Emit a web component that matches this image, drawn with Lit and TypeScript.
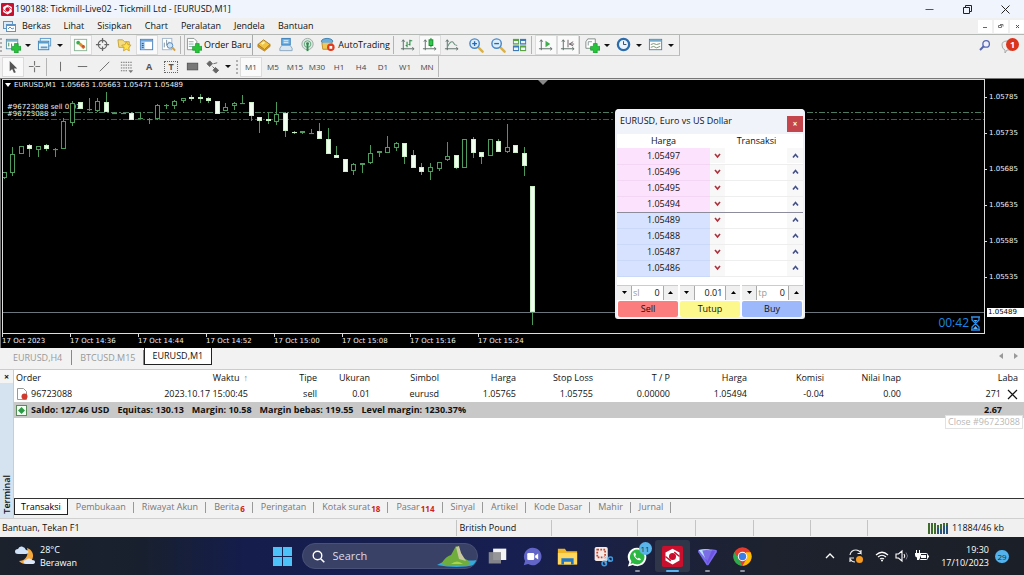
import { LitElement, html, svg, css, nothing } from 'lit';
import { customElement } from 'lit/decorators.js';
import { classMap } from 'lit/directives/class-map.js';

const plus = svg`<path d="M10 7h4v3h3v4h-3v3h-4v-3H7v-4h3z" fill="#27c43a" stroke="#14902a" stroke-width=".7"/>`;
const axes = svg`<path d="M3.500 3v11M1 12.500h13.500M2 5l1.500-2L5 5M13 11l2 1.500-2 1.500" fill="none" stroke="#5c6b66"/>`;
const lens = svg`<path d="M10.500 10.500l5 5" stroke="#d9b04a" stroke-width="2.600" stroke-linecap="round"/><circle cx="7" cy="7" r="5" fill="#d9edfb" stroke="#4b87c4" stroke-width="1.500"/>`;

const icons: Record<string, unknown> = {
  newChart: svg`<rect x="1.500" y="2.500" width="12" height="10" fill="#fff" stroke="#5a93a8"/><path d="M2 4h11" stroke="#7db4cc" stroke-width="2"/><path d="M4 10V6M7 10V7" stroke="#3a8a4a"/>${plus}`,
  profiles: svg`<rect x="3.500" y="1.500" width="11" height="8" fill="#e8f3fb" stroke="#5b9ccb"/><rect x="1.500" y="4.500" width="11" height="9" fill="#e8f3fb" stroke="#3d80b5"/><path d="M2 6h10M4 11h7" stroke="#5b9ccb" stroke-width="2"/>`,
  market: svg`<rect x="1.500" y="2.500" width="13" height="12" fill="#fbfffb" stroke="#8fb59a"/><circle cx="5.500" cy="6" r="2" fill="#2fae4a"/><path d="M7 7l5 5" stroke="#e08b2d" stroke-width="3"/><circle cx="11" cy="10" r="1.500" fill="#c8502d"/>`,
  crosshair: svg`<circle cx="8" cy="8" r="4.500" fill="none" stroke="#666" stroke-width="1.300"/><path d="M8 1v5M8 10v5M1 8h5M10 8h5" stroke="#666" stroke-width="1.300"/>`,
  star: svg`<path d="M1 3h5l2 2h5v6H2z" fill="#f3dc85" stroke="#c4a23c"/><path d="M10 5l1.600 3.200 3.400.5-2.500 2.500.6 3.500L10 13l-3.100 1.700.6-3.500L5 8.700l3.400-.5z" fill="#ffe14d" stroke="#c69a1a" stroke-width=".8"/>`,
  navigator: svg`<rect x="1.500" y="2.500" width="13" height="11" fill="#fff" stroke="#4a7fb8"/><path d="M2 4h12" stroke="#6ea4d8" stroke-width="2"/><rect x="2" y="5" width="4" height="8" fill="#9cc4ec"/><path d="M3 7h2M3 9h2M3 11h2" stroke="#356"/>`,
  tester: svg`<rect x="1.500" y="1.500" width="10" height="12" fill="#fff" stroke="#a3b8cc"/><path d="M3.500 11V6M6 9V3M8.500 11V5" stroke="#7a8d9d"/><circle cx="9.500" cy="9" r="3" fill="#cfe6f9" stroke="#5388bd"/><path d="M12 11l3 3.500" stroke="#d0a04a" stroke-width="2"/>`,
  order: svg`<path d="M1.500 1.500h7l3 3v9h-10z" fill="#fff" stroke="#8a958f"/><path d="M3 5h5M3 7.500h5M3 10h4" stroke="#8aa"/>${plus}`,
  editor: svg`<path d="M2 8l6-5 7 5-6 5.500z" fill="#f3c440" stroke="#a97a1c"/><path d="M2 8v2.500L9 15l6-5V8l-6 5.500z" fill="#d99b28" stroke="#a97a1c" stroke-width=".7"/><path d="M6 7.500l3-2" stroke="#fff3b0" stroke-width="2"/>`,
  terminal: svg`<rect x="4" y="1.500" width="9" height="7" fill="#6cb2e8" stroke="#3a7fb8"/><path d="M6 4h5M6 6h5" stroke="#e4f4ff"/><path d="M2 12l2-3h9l2 3v2.500H2z" fill="#d8e6f2" stroke="#8aa5bd"/>`,
  signal: svg`<circle cx="8" cy="7.500" r="6" fill="#dfe7e3" stroke="#9caaa4"/><circle cx="8" cy="7.500" r="3.500" fill="none" stroke="#5fa87a"/><path d="M8 7v8" stroke="#2c8c4c" stroke-width="2"/><circle cx="8" cy="7" r="1.500" fill="#2c8c4c"/>`,
  auto: svg`<ellipse cx="7.500" cy="4.500" rx="6" ry="3" fill="#6aaede" stroke="#3b7fb0"/><path d="M2 6l1 7h8l2-7" fill="#f0c657" stroke="#bd8d2a"/><circle cx="11.500" cy="11" r="4" fill="#df3b1c"/><rect x="10" y="9.500" width="3" height="3" fill="#fff"/>`,
  bars: svg`${axes}<path d="M7.500 5v6M6 9h1.500M10.500 3v6M10.500 4H13M9 8h1.500" fill="none" stroke="#2c8e46" stroke-width="1.200"/>`,
  candles: svg`${axes}<path d="M9.500 1v10" stroke="#148a2a"/><rect x="7.500" y="3" width="4" height="6" fill="#2ec84a" stroke="#148a2a"/>`,
  line: svg`${axes}<path d="M4 10c2-5 5-6 6-4s2 3 4 3" fill="none" stroke="#6e9480" stroke-width="1.200"/>`,
  zoomIn: svg`${lens}<path d="M7 4.500v5M4.500 7h5" stroke="#2767ad" stroke-width="1.400"/>`,
  zoomOut: svg`${lens}<path d="M4.500 7h5" stroke="#2767ad" stroke-width="1.400"/>`,
  tile: svg`<rect x="1" y="2" width="6.500" height="6" fill="#5aa33e"/><rect x="8.500" y="2" width="6.500" height="6" fill="#3d79b8"/><rect x="1" y="9" width="6.500" height="6" fill="#3d79b8"/><rect x="8.500" y="9" width="6.500" height="6" fill="#5aa33e"/><path d="M2 5.500h4.500M9.500 5.500H14M2 12.500h4.500M9.500 12.500H14" stroke="#eaf5ff" stroke-width="2.500"/>`,
  scroll: svg`${axes}<path d="M8 4l5 3.500L8 11z" fill="#3fae4c"/>`,
  shift: svg`${axes}<path d="M8.500 3v8M14 5l-4 2.500 4 2M10 7.500h5" stroke="#6a5f66" fill="none"/>`,
  indicators: svg`<path d="M4 2h8v10H2V5z" fill="#fff" stroke="#7e8a85"/><path d="M4.500 9V5h4" stroke="#899" fill="none"/>${plus}`,
  clock: svg`<circle cx="8" cy="8" r="6" fill="#e9f4fc" stroke="#2c6cab" stroke-width="2.400"/><path d="M8 4.500V8h3" stroke="#345" fill="none"/>`,
  template: svg`<rect x="1.500" y="2.500" width="13" height="11" fill="#fff" stroke="#4f87a5"/><path d="M2 4h12" stroke="#73aacb" stroke-width="2"/><path d="M3 8l3-1 3 1 4-1M3 11l3-1 3 1.500L13 10" fill="none" stroke="#75906c"/>`,
  cursor: svg`<path d="M5 2v11l2.600-2.500L9.500 15l2-1-2-4H13z" fill="#555"/>`,
  cross: svg`<path d="M8 2v5M8 9v5M2 8h5M9 8h5" stroke="#777" stroke-width="1.200"/>`,
  vline: svg`<path d="M8 3v10" stroke="#666"/>`,
  hline: svg`<path d="M3 8h10" stroke="#666"/>`,
  tline: svg`<path d="M3 13L13 3" stroke="#666"/>`,
  fibo: svg`<path d="M2 3.500h12M2 6.500h12M2 9.500h12M2 12.500h7" stroke="#666" stroke-dasharray="1.500 1"/><path d="M10 12h5l-2.500 3z" fill="#777"/>`,
  rect: svg`<rect x="2.500" y="4.500" width="11" height="7" fill="#777" stroke="#555"/>`,
  shapes: svg`<path d="M5 2l3 3-3 3-3-3zM8 8l3 3M11 9l3.500 3-3 3-3-3zM9 5l4-1" fill="#666" stroke="#666"/>`,
};
const icon = (n: string) => html`<svg class="ic" viewBox="0 0 17 17" aria-hidden="true">${icons[n]}</svg>`;

type Tool = { i?: string; t?: string; k?: 'dd' | 'sep' | 'grip' | 'gap'; on?: boolean; label?: string };
const mainTools: Tool[] = [
  { k: 'grip' }, { i: 'newChart', k: 'dd', label: 'Grafik baru' }, { i: 'profiles', k: 'dd', label: 'Profil' }, { k: 'gap' },
  { i: 'market', label: 'Pengamatan pasar', on: true }, { i: 'crosshair', label: 'Jendela data' }, { i: 'star', label: 'Navigator' },
  { i: 'navigator', label: 'Terminal', on: true }, { i: 'tester', label: 'Penguji' }, { k: 'sep' },
  { i: 'order', t: 'Order Baru' }, { i: 'editor', label: 'Editor' }, { i: 'terminal', label: 'VPS' }, { i: 'signal', label: 'Sinyal' },
  { i: 'auto', t: 'AutoTrading' }, { k: 'sep' },
  { i: 'bars', label: 'Bar' }, { i: 'candles', label: 'Candlestick', on: true }, { i: 'line', label: 'Garis' }, { k: 'gap' },
  { i: 'zoomIn', label: 'Perbesar' }, { i: 'zoomOut', label: 'Perkecil' }, { i: 'tile', label: 'Susun' }, { k: 'sep' },
  { i: 'scroll', label: 'Gulir otomatis', on: true }, { i: 'shift', label: 'Geser grafik', on: true }, { k: 'sep' },
  { i: 'indicators', k: 'dd', label: 'Indikator' }, { i: 'clock', k: 'dd', label: 'Periode' }, { i: 'template', k: 'dd', label: 'Template' },
];
const drawTools: Tool[] = [
  { k: 'gap' }, { i: 'cursor', label: 'Kursor', on: true }, { i: 'cross', label: 'Crosshair' }, { k: 'sep' },
  { i: 'vline', label: 'Garis vertikal' }, { i: 'hline', label: 'Garis horisontal' }, { i: 'tline', label: 'Garis tren' },
  { i: 'fibo', label: 'Fibonacci' }, { t: 'A', k: 'gap', label: 'Teks' }, { t: 'T', k: 'gap', label: 'Label teks' },
  { i: 'rect', label: 'Persegi' }, { i: 'shapes', k: 'dd', label: 'Panah' }, { k: 'grip' },
];
const frames = ['M1', 'M5', 'M15', 'M30', 'H1', 'H4', 'D1', 'W1', 'MN'];

// Each candle: filled, body top, body bottom, high, low (pixels, measured from TOP above the plot).
const candles: [number, number, number, number, number][] = [
  [0, 172, 178, 172, 179], [0, 154, 173, 147, 176], [0, 146, 154, 146, 154], [1, 145, 149, 144, 157], [0, 146, 150, 146, 157],
  [1, 145, 149, 144, 151], [0, 149, 149, 148, 157], [0, 121, 149, 118, 149], [0, 103, 123, 101, 126], [1, 102, 109, 102, 109],
  [0, 109, 109, 98, 111], [0, 101, 111, 98, 112], [1, 102, 112, 92, 112], [0, 113, 113, 112, 114], [0, 113, 113, 113, 114],
  [1, 113, 120, 112, 120], [0, 118, 118, 112, 119], [0, 119, 119, 118, 124], [0, 105, 119, 104, 120], [0, 105, 105, 104, 109],
  [0, 101, 106, 100, 109], [0, 98, 101, 98, 103], [1, 97, 99, 95, 101], [1, 97, 99, 94, 103], [1, 98, 101, 97, 103],
  [1, 101, 114, 101, 114], [0, 107, 111, 103, 111], [0, 103, 106, 102, 110], [0, 103, 103, 95, 104], [1, 102, 116, 102, 121],
  [1, 117, 121, 117, 133], [1, 119, 121, 112, 124], [0, 114, 122, 102, 125], [1, 113, 131, 112, 137], [1, 132, 133, 131, 134],
  [0, 131, 133, 131, 134], [0, 133, 133, 129, 134], [1, 131, 139, 123, 139], [1, 139, 154, 128, 154], [1, 155, 158, 146, 158],
  [1, 159, 172, 159, 172], [0, 164, 171, 163, 175], [0, 163, 165, 163, 173], [0, 153, 163, 145, 164], [0, 151, 153, 151, 157],
  [0, 147, 153, 136, 153], [0, 143, 148, 142, 151], [1, 143, 157, 143, 164], [1, 155, 168, 150, 168], [1, 167, 172, 163, 175],
  [0, 167, 172, 163, 180], [0, 162, 169, 162, 171], [0, 156, 160, 142, 161], [1, 155, 168, 155, 169], [0, 139, 168, 139, 168],
  [1, 139, 153, 137, 158], [1, 152, 157, 152, 164], [0, 139, 156, 139, 156], [1, 141, 152, 139, 152], [0, 147, 152, 124, 153],
  [1, 145, 153, 145, 153], [1, 153, 166, 147, 176], [1, 186, 312, 186, 325],
];
const TOP = 80;

const cols = [
  ['Order', '96723088'], ['Waktu', '2023.10.17 15:00:45'], ['Tipe', 'sell'], ['Ukuran', '0.01'], ['Simbol', 'eurusd'], ['Harga', '1.05765'],
  ['Stop Loss', '1.05755'], ['T / P', '0.00000'], ['Harga', '1.05494'], ['Komisi', '-0.04'], ['Nilai Inap', '0.00'],
];
const totals = ['Saldo: 127.46 USD', 'Equitas: 130.13', 'Margin: 10.58', 'Margin bebas: 119.55', 'Level margin: 1230.37%'];
const termTabs: [string, string?][] = [['Transaksi'], ['Pembukaan'], ['Riwayat Akun'], ['Berita', '6'], ['Peringatan'], ['Kotak surat', '18'],
  ['Pasar', '114'], ['Sinyal'], ['Artikel'], ['Kode Dasar'], ['Mahir'], ['Jurnal']];

const logo = svg`<rect width="24" height="24" rx="2" fill="#c8102e"/><path d="M12 3l8 4.500v9L12 21l-8-4.500v-9z" fill="#fff"/><circle cx="12" cy="12" r="4" fill="#c8102e"/><path d="M14 7l6 5M4 12l6 5" stroke="#c8102e" stroke-width="1.500"/>`;

const apps: [string, unknown, string?][] = [
  ['Tampilan tugas', svg`<rect x="7" y="3" width="15" height="13" fill="#f4f4f4"/><rect x="2" y="7" width="14" height="13" fill="#8d8d90" opacity=".92"/>`],
  ['Chat', svg`<path d="M12 2a10 10 0 1 1-5 18.500L2 22l1.500-5A10 10 0 0 1 12 2z" fill="#6264c7"/><rect x="6" y="8" width="8" height="8" rx="1.500" fill="#fff"/><path d="M15 11l3.500-2.500v7L15 13z" fill="#fff"/>`],
  ['File Explorer', svg`<path d="M1 3h8l2 3h12v15H1z" fill="#f0b429"/><path d="M1 8h22v13H1z" fill="#ffd75e"/><path d="M5 14h14v7H5z" fill="#2077c9"/><path d="M8 18h8v3H8z" fill="#ffd75e"/>`],
  ['Alat Pemotong', svg`<rect x="3" y="1" width="15" height="16" rx="2" fill="#f5e9e6"/><rect x="6" y="4" width="9" height="9" fill="none" stroke="#c8452c" stroke-width="2" stroke-dasharray="2 1.500"/><path d="M12 12l9 5M17 11l-2 9" stroke="#ccd9e8" stroke-width="1.500"/><circle cx="14" cy="20" r="2.500" fill="none" stroke="#3b9ae0" stroke-width="1.800"/><circle cx="21" cy="15" r="2.500" fill="none" stroke="#3b9ae0" stroke-width="1.800"/>`],
  ['WhatsApp', svg`<path d="M11.500 2a10.500 10.500 0 1 1-5 19.700L1 23.500l1.700-5.200A10.500 10.500 0 0 1 11.500 2z" fill="#fff"/><path d="M11.500 4a8.500 8.500 0 1 1-4.700 15.600L4 20.500l1-3A8.500 8.500 0 0 1 11.500 4z" fill="#2cb742"/><path d="M8 8c-1.500 2 1 5.500 3 7s4 2 5 0l-2.500-1.500-1.200 1c-1.500-.7-2.500-1.800-3-3l1-1.200L9.300 7.500z" fill="#fff"/>`, 'run'],
  ['Tickmill', logo, 'active'],
  ['Proton VPN', svg`<path d="M2 4.500q9-2 20 0 1.500.5.500 2.500L13.500 21q-1.500 2-3 0L1.500 7Q.5 5 2 4.500z" fill="#7a6cf0"/><path d="M2 4.500q8-2 15 .5L12 17 4 7z" fill="#b9e3f8"/><path d="M6 5q7-1 15 1L12 21z" fill="#6a4fe0" opacity=".8"/>`, 'run'],
  ['Chrome', svg`<circle cx="12" cy="12" r="10.500" fill="#e33b2e"/><path d="M2.900 6.800L7.500 14.500 12 22.500A10.500 10.500 0 0 1 2.900 6.800z" fill="#2da94f"/><path d="M12 22.500l5-8.500-1-7h5.200A10.500 10.500 0 0 1 12 22.500z" fill="#fdbd00"/><circle cx="12" cy="12" r="5.400" fill="#fff"/><circle cx="12" cy="12" r="4.200" fill="#3a7de8"/>`, 'run'],
];

const base = css`
  :host { display: block; font-family: "Open Sans", "Noto Sans", sans-serif; font-size: 9px; line-height: 12px; color: #111; }
  * { box-sizing: border-box; }
  button, input { font: inherit; color: inherit; border: 0; padding: 0; margin: 0; background: none; border-radius: 0; min-width: 0; }
  a { color: inherit; text-decoration: none; }
  table { border-collapse: collapse; }
  svg { display: block; }
`;

@customElement('tool-bars')
class ToolBars extends LitElement {
  static styles = [base, css`
    .bar { display: flex; align-items: center; background: #f0f0f0; }
    .main { height: 22px; border-top: 1px solid #b4b8b4; }
    .draw { height: 21px; }
    .group { display: flex; align-items: center; align-self: stretch; border-right: 1px solid #b8b8b8; }
    .main .group { border-bottom: 1px solid #c0c0c0; }
    .tool { width: 22px; height: 20px; display: flex; align-items: center; justify-content: center; gap: 2px; white-space: nowrap; }
    .text { width: auto; padding: 0 3px 0 1px; }
    .raised { border-right: 1px solid #aaa; border-left: 1px solid #bbb; padding-right: 1px; }
    .dd { width: 32px; justify-content: space-between; padding: 0 5px 0 1px; }
    .dd::after { content: ""; border: 3px solid transparent; border-top-color: #111; border-bottom: 0; }
    .on { background: #fafafa; box-shadow: inset 0 0 0 1px #dcdcdc; }
    .ic { width: 16px; height: 16px; flex: none; }
    .sep { width: 4px; height: 18px; border-left: 1px solid #b4b4b4; }
    .gap { width: 2px; }
    .grip { width: 4px; height: 14px; border-left: 2px dotted #b0b0b0; }
    .frame { font-size: 8px; color: #444; }
    .letter { font-weight: 700; color: #555; }
    .boxed { border: 1px dotted #666; padding: 0 3px; line-height: 10px; }
    .right { display: flex; align-items: center; gap: 10px; margin-left: auto; padding-right: 5px; }
    .find { width: 13px; height: 13px; }
    .alert { width: 18px; height: 16px; }
    .count { fill: #fff; font-size: 9px; font-weight: 700; }
  `];
  tool(t: Tool) {
    if (!t.i && !t.t) return html`<span class=${t.k!}></span>`;
    if (t.k === 'gap') return html`<button class="tool letter" aria-label=${t.label!}><span class=${t.t === 'T' ? 'boxed' : ''}>${t.t}</span></button>`;
    return html`<button class=${classMap({ tool: true, dd: t.k === 'dd', on: !!t.on, text: !!t.t, raised: t.i === 'order' })} aria-label=${t.label ?? t.t!}>${icon(t.i!)}${t.t ?? nothing}</button>`;
  }
  render() {
    return html`
      <div class="bar main">
        <div class="group">${mainTools.map(t => this.tool(t))}</div>
        <div class="right">
          <button aria-label="Cari"><svg class="find" viewBox="0 0 16 16"><circle cx="10" cy="6" r="4" fill="#eef" stroke="#5565ae" stroke-width="1.600"/><path d="M7 9l-4.500 4.500" stroke="#5565ae" stroke-width="2.400"/></svg></button>
          <button aria-label="Pemberitahuan"><svg class="alert" viewBox="0 0 18 16"><path d="M1 7q0-4 5-4h4v9H6l-2 3v-3q-3-1-3-5z" fill="#eee" stroke="#aaa"/><circle cx="11.500" cy="6.500" r="6.500" fill="#d9341c"/><text class="count" x="9" y="10">1</text></svg></button>
        </div>
      </div>
      <div class="bar draw">
        <div class="group">
          ${drawTools.map(t => this.tool(t))}
          ${frames.map((f, i) => html`<button class=${classMap({ tool: true, frame: true, on: i === 0 })}>${f}</button>`)}
        </div>
      </div>`;
  }
}

@customElement('price-chart')
class PriceChart extends LitElement {
  static styles = [base, css`
    :host { background: #000; color: #f0f0f0; border: 1px solid #777; border-width: 1px 0 0 1px; padding-left: 1px; font-family: "DejaVu Sans", sans-serif; font-size: 7px; line-height: 8px; }
    .grid { display: grid; grid-template: minmax(0, 1fr) 14px / minmax(0, 1fr) 39px; height: 100%; }
    .plot { position: relative; border: 1px solid #ddd; min-height: 0; }
    .canvas { position: absolute; inset: 0; width: 100%; height: 100%; }
    .wick { stroke: #4c9a5a; }
    .hollow { fill: #000; stroke: #4f9c5e; }
    .full { fill: #f2fff0; stroke: #c8f0c4; }
    .legend { position: absolute; left: 2px; top: 1px; display: flex; align-items: center; gap: 3px; }
    .orders { position: absolute; left: 4px; top: 24px; line-height: 7px; white-space: nowrap; }
    .timer { position: absolute; right: 3px; bottom: 2px; display: flex; align-items: center; gap: 1px; color: #1f87e6; font-family: "Open Sans", sans-serif; font-size: 12px; line-height: 16px; }
    .glass { width: 11px; height: 15px; }
    .prices { position: relative; }
    .price { display: flex; align-items: center; gap: 2px; height: 36px; }
    .price::before { content: ""; width: 2px; height: 1px; background: #ddd; }
    .tag { position: absolute; left: 2px; right: 0; bottom: 17px; background: #fff; color: #000; padding-left: 1px; height: 9px; }
    .times { display: grid; grid-auto-flow: column; grid-auto-columns: 68px; white-space: nowrap; }
    .times span::before { content: ""; display: block; width: 1px; height: 3px; background: #ddd; }
    .marker { position: absolute; left: 535px; top: 0; border: 5px solid transparent; border-top-color: #888; border-bottom: 0; }
  `];
  render() {
    const times = ['17 Oct 2023', '17 Oct 14:36', '17 Oct 14:44', '17 Oct 14:52', '17 Oct 15:00', '17 Oct 15:08', '17 Oct 15:16', '17 Oct 15:24'];
    const prices = ['1.05785', '1.05735', '1.05685', '1.05635', '1.05585', '1.05535'];
    return html`<div class="grid">
      <div class="plot">
        <div class="orders"><div>#96723088 sell 0.01</div><div>#96723088 sl</div></div>
        <svg class="canvas" aria-hidden="true">
          <line x1="0" x2="100%" y1="32.500" y2="32.500" stroke="#4f7a62" stroke-dasharray="6 2 2 2"/>
          <line x1="0" x2="100%" y1="39.500" y2="39.500" stroke="#a02c38" stroke-dasharray="6 2 2 2"/>
          <line x1="0" x2="100%" y1="232.500" y2="232.500" stroke="#6d757d"/>
          ${candles.map(([f, t, b, h, l], i) => {
            const x = Math.round(0.5 + i * 8.53) + 0.5;
            return svg`<line class="wick" x1=${x} x2=${x} y1=${h - TOP} y2=${l - TOP}/>
              <rect class=${f ? 'full' : 'hollow'} x=${x - 2} y=${t - TOP + 0.5} width="4" height=${Math.max(b - t - 1, 0.1)}/>`;
          })}
        </svg>
        <i class="marker"></i>
        <div class="legend"><svg width="6" height="4"><path d="M0 0h6L3 4z" fill="#fff"/></svg><span>EURUSD,M1&nbsp; 1.05663 1.05663 1.05471 1.05489</span></div>
        <div class="timer">00:42<svg class="glass" viewBox="0 0 11 15"><path d="M1 1h9M1 14h9M2 1v3l7 7v3M9 1v3l-7 7v3" fill="none" stroke="#2f8fe8" stroke-width="1.300"/><path d="M3 13l2.500-3L8 13zM3.500 4h4L5.500 6z" fill="#5fb0f5"/></svg></div>
      </div>
      <div class="prices">${prices.map(p => html`<div class="price">${p}</div>`)}<div class="tag">1.05489</div></div>
      <div class="times">${times.map(t => html`<span>${t}</span>`)}</div>
    </div>`;
  }
}

@customElement('depth-window')
class DepthWindow extends LitElement {
  static styles = [base, css`
    :host { width: 190px; background: #fff; border: 2px solid #eef1f8; border-top: 0; border-radius: 4px 4px 3px 3px; overflow: hidden; }
    .head { display: flex; justify-content: space-between; align-items: center; height: 25px; padding: 0 0 2px 3px; background: #f0f3fa; }
    .close { width: 16px; height: 16px; align-self: flex-end; background: #c4464c; color: #fff; font-weight: 700; font-size: 8px; }
    table { width: 100%; table-layout: fixed; }
    th { font-weight: 400; height: 14px; padding: 0; }
    td { height: 16px; padding: 0; text-align: center; border-bottom: 1px solid #eee; }
    .p { width: 93px; } .s { width: 15px; } .b { width: 16px; }
    .ask { background: #fde2fd; border-color: #f3d6f3; }
    .bid { background: #d6e2ff; border-color: #cad9f8; }
    .split td { border-bottom-color: #8c8c9c; }
    .arrow { width: 100%; height: 15px; display: grid; place-items: center; background: #f8f8f8; }
    .arrow svg { fill: none; stroke: #b0303c; stroke-width: 1.600; }
    .arrow.up svg { stroke: #44508a; }
    .fields { display: grid; grid-template-columns: repeat(3, 1fr); gap: 2px; padding-top: 8px; }
    .field { display: flex; align-items: stretch; height: 15px; border-top: 1px solid #ccc; }
    .field label { color: #999; padding-left: 1px; line-height: 14px; }
    .field input { flex: 1; width: 0; text-align: right; padding-right: 3px; }
    .step { width: 15px; background: #f0f0f0; border-right: 1px solid #aaa; display: grid; place-items: center; }
    .step.more { border-right: 0; border-left: 1px solid #aaa; }
    .actions { display: grid; grid-template-columns: repeat(3, 1fr); gap: 2px; padding: 1px 1px 0; height: 17px; }
    .actions button { border-radius: 2px; }
    .sell { background: #fb7d7d; } .shut { background: #fdf88c; } .buy { background: #9db9fb; }
  `];
  field(id: string, tag: string, v: string) {
    return html`<div class="field"><button class="step" aria-label="Kurangi"><svg width="5" height="3"><path d="M0 0h5L2.500 3z"/></svg></button>
      <label for=${id} aria-label=${id}>${tag}</label><input id=${id} .value=${v}>
      <button class="step more" aria-label="Tambah"><svg width="5" height="3"><path d="M0 3h5L2.500 0z"/></svg></button></div>`;
  }
  render() {
    const rows = ['1.05497', '1.05496', '1.05495', '1.05494', '1.05489', '1.05488', '1.05487', '1.05486'];
    return html`
      <div class="head"><span>EURUSD, Euro vs US Dollar</span><button class="close" aria-label="Tutup jendela">×</button></div>
      <table>
        <colgroup><col class="p"><col class="s"><col><col class="b"></colgroup>
        <thead><tr><th>Harga</th><th colspan="3">Transaksi</th></tr></thead>
        <tbody>${rows.map((r, i) => html`<tr class=${i === 3 ? 'split' : ''}>
          <td class=${i < 4 ? 'ask' : 'bid'}>${r}</td>
          <td><button class="arrow" aria-label="Jual"><svg width="7" height="6"><path d="M1 1l2.500 3L6 1"/></svg></button></td>
          <td></td>
          <td><button class="arrow up" aria-label="Beli"><svg width="7" height="6"><path d="M1 4.500l2.500-3 2.500 3"/></svg></button></td>
        </tr>`)}</tbody>
      </table>
      <div class="fields">${this.field('sl', 'sl', '0')}${this.field('volume', '', '0.01')}${this.field('tp', 'tp', '0')}</div>
      <div class="actions"><button class="sell">Sell</button><button class="shut">Tutup</button><button class="buy">Buy</button></div>`;
  }
}

@customElement('trade-terminal')
class TradeTerminal extends LitElement {
  static styles = [base, css`
    :host { display: flex; background: #fff; border-top: 1px solid #ccc; }
    .side { width: 13px; display: flex; flex-direction: column; justify-content: space-between; align-items: center; background: #d5e2f0; }
    .side button { width: 13px; height: 13px; background: #f4f4f4; font-weight: 700; line-height: 10px; }
    .name { writing-mode: vertical-rl; transform: rotate(180deg); font-weight: 600; padding-top: 4px; }
    .body { flex: 1; min-width: 0; display: flex; flex-direction: column; border-left: 1px solid #ccc; }
    .sheet { flex: 1; position: relative; }
    table { width: 100%; table-layout: fixed; }
    th, td { font-weight: 400; text-align: right; padding: 0 4px 0 2px; height: 16px; white-space: nowrap; }
    th:first-child, td:first-child { text-align: left; }
    th:last-child, td:last-child { padding-right: 6px; }
    .c0 { width: 98px; } .c1 { width: 140px; } .c2 { width: 69px; } .c3 { width: 53px; } .c4 { width: 69px; } .cn { width: 77px; }
    .order { display: flex; align-items: center; gap: 3px; }
    .order svg { width: 12px; height: 12px; }
    .sort { color: #888; padding-left: 4px; }
    .profit { display: flex; justify-content: flex-end; align-items: center; gap: 5px; }
    .profit button { width: 12px; height: 14px; display: grid; place-items: center; }
    .sum td { background: #c8c8c8; font-weight: 700; }
    .sum .total { padding-right: 22px; }
    .sums { display: flex; gap: 8px; align-items: center; }
    .sums svg { width: 11px; height: 11px; margin-right: -4px; }
    .tip { position: absolute; right: 1px; top: 45px; background: #fff; border: 1px solid #e2e2e2; color: #b8b8b8; padding: 0 2px; }
    .tabs { display: flex; height: 20px; border-top: 1px solid #333; background: #f2f2f2; align-items: flex-start; }
    .tab { height: 15px; padding: 0 8px; color: #777; position: relative; white-space: nowrap; }
    .tab::after { content: ""; position: absolute; right: 0; top: 3px; height: 11px; border-right: 1px solid #999; }
    .cur { background: #fff; color: #000; border: 1px solid #222; border-top: 0; height: 16px; padding: 0 6px; }
    .cur::after { display: none; }
    .n { color: #d02020; font-size: 8px; line-height: 0; font-weight: 700; vertical-align: -2px; padding-left: 1px; }
  `];
  render() {
    return html`
      <div class="side"><button aria-label="Tutup terminal">×</button><span class="name">Terminal</span></div>
      <div class="body">
        <div class="sheet">
          <table>
            <colgroup><col class="c0"><col class="c1"><col class="c2"><col class="c3"><col class="c4"><col class="cn"><col class="cn"><col class="cn"><col class="cn"><col class="cn"><col class="cn"><col></colgroup>
            <thead><tr>${cols.map(([h], i) => html`<th>${h}${i === 1 ? html`<span class="sort">↑</span>` : nothing}</th>`)}<th>Laba</th></tr></thead>
            <tbody>
              <tr>${cols.map(([, v], i) => html`<td>${i ? v : html`<div class="order"><svg viewBox="0 0 12 12"><path d="M1.500.5h6l3 3v8h-9z" fill="#fff" stroke="#999"/><circle cx="8.500" cy="8.500" r="3" fill="#d0392b"/></svg>${v}</div>`}</td>`)}
                <td><div class="profit">271<button aria-label="Tutup order"><svg width="11" height="11"><path d="M1 1l9 9M10 1l-9 9" stroke="#111" stroke-width="1.200"/></svg></button></div></td></tr>
              <tr class="sum"><td colspan="11"><div class="sums"><svg viewBox="0 0 11 11"><rect x=".5" y=".5" width="10" height="10" fill="#f4fff4" stroke="#5a8a5a"/><path d="M5.500 2L9 5.500 5.500 9 2 5.500z" fill="#2b9a45"/></svg>
                ${totals.map(t => html`<span>${t}</span>`)}</div></td><td class="total">2.67</td></tr>
            </tbody>
          </table>
          <div class="tip" role="tooltip">Close #96723088</div>
        </div>
        <div class="tabs">${termTabs.map(([t, n], i) => html`<button class=${classMap({ tab: true, cur: i === 0 })}>${t}${n ? html`<span class="n">${n}</span>` : nothing}</button>`)}</div>
      </div>`;
  }
}

@customElement('task-bar')
class TaskBar extends LitElement {
  static styles = [base, css`
    :host { display: grid; grid-template-columns: 1fr auto 1fr; align-items: center; height: 38px; color: #fff; padding: 0 15px;
      background: linear-gradient(90deg, #1c222c 0%, #18202f 14%, #141d4c 24%, #161f50 50%, #1b2140 62%, #1d222e 75%, #1b1f27 100%); }
    .weather { display: flex; align-items: center; gap: 5px; line-height: 13px; }
    .apps { display: flex; align-items: center; }
    .app { width: 35px; height: 32px; display: flex; align-items: center; justify-content: center; position: relative; border-radius: 3px; }
    .app > svg { width: 21px; height: 21px; }
    .app .tiles { width: 19px; height: 19px; }
    .search { width: 176px; height: 26px; border-radius: 13px; background: #3a4166; border: 1px solid #4a5178; display: flex; align-items: center; gap: 8px; padding-left: 9px; margin: 0 2px 0 2px; overflow: hidden; }
    .search input { flex: 1; font-size: 11px; line-height: 16px; color: #e8e8f0; }
    .search input::placeholder { color: #dcdce8; opacity: 1; }
    .isle { width: 40px; height: 24px; }
    .run::after, .active::after { content: ""; position: absolute; bottom: 0; left: 50%; width: 5px; margin-left: -2px; height: 2px; border-radius: 1px; background: #8d93a0; }
    .active { background: #30364a; }
    .active::after { width: 13px; margin-left: -6px; background: #5cb4f2; }
    .badge { position: absolute; right: 3px; top: 2px; min-width: 13px; height: 13px; line-height: 13px; border-radius: 7px; background: #58b4ea; color: #12304a; font-size: 8px; }
    .tray { display: flex; justify-content: flex-end; align-items: center; gap: 6px; }
    .tray svg { width: 14px; height: 14px; }
    .tray .chev { margin-right: 6px; }
    .when { text-align: right; line-height: 13px; margin-left: 6px; }
    .note { background: #53b2ec; color: #12304a; border-radius: 7px; width: 14px; height: 13px; line-height: 13px; text-align: center; font-size: 8px; }
  `];
  render() {
    return html`
      <div class="weather">
        <svg width="20" height="20" viewBox="0 0 20 20"><path d="M12 2a8 8 0 1 1-8 13c7 0 10-6 8-13z" fill="#f5a93a"/><path d="M3 8q-3 0-3-2.500T3 3q1-3 4-2.500T11 4q2.500 0 2.500 2T11 8z" fill="#cfe2f8"/><path d="M11 18q-2.500 0-2.500-2t2.500-2q1-2 3.500-1.500T17 14q3 0 3 2t-3 2z" fill="#dde8f8"/></svg>
        <div>28°C<br>Berawan</div>
      </div>
      <nav class="apps">
        <button class="app" aria-label="Mulai"><svg class="tiles" viewBox="0 0 20 20"><path d="M0 0h9.500v9.500H0zM10.500 0H20v9.500h-9.500zM0 10.500h9.500V20H0zM10.500 10.500H20V20h-9.500z" fill="#4cc2f8"/></svg></button>
        <div class="search"><svg width="13" height="13" viewBox="0 0 13 13"><circle cx="5.500" cy="5.500" r="4.300" fill="none" stroke="#fff" stroke-width="1.400"/><path d="M8.700 8.700l3.600 3.600" stroke="#fff" stroke-width="1.600"/></svg>
          <input aria-label="Search" placeholder="Search">
          <svg class="isle" viewBox="0 0 40 24"><path d="M0 21q10-6 22-5t18 0l-2 5q-18 4-38 0z" fill="#35a9dc"/><path d="M4 20q5-8 10-9l5-9 3 3 4 9q6 2 8 6-14 4-30 0z" fill="#6fae3c"/><path d="M19 3l3-1 2 7 5 8-7-2z" fill="#c9c7a0"/><path d="M14 20q6-5 12 0z" fill="#a8d44e"/></svg></div>
        ${apps.map(([n, g, s]) => html`<button class="app ${s ?? ''}" aria-label=${n}><svg viewBox="0 0 24 24">${g}</svg>${n === 'WhatsApp' ? html`<span class="badge">11</span>` : nothing}</button>`)}
      </nav>
      <div class="tray">
        <svg class="chev" viewBox="0 0 14 14"><path d="M3 9l4-4 4 4" fill="none" stroke="#fff" stroke-width="1.300"/></svg>
        <svg class="chev" viewBox="0 0 14 14"><path d="M1 6q1-5 6-5 3 0 5 3V1M12 4.500H8.500M1 13V9h4M1 10q2 3 5 3" fill="none" stroke="#e8e8e8" stroke-width="1.200"/><circle cx="10.500" cy="10.500" r="3.500" fill="#f59a23"/></svg>
        <svg viewBox="0 0 14 14"><path d="M1 6q6-5.500 12 0M3 8q4-3.500 8 0M5 10q2-1.500 4 0" fill="none" stroke="#fff" stroke-width="1.200"/><circle cx="7" cy="11.500" r="1" fill="#fff"/></svg>
        <svg viewBox="0 0 14 14"><path d="M1 5h2.500L7 2v10L3.500 9H1zM9 5q1.500 2 0 4" fill="none" stroke="#fff" stroke-width="1.100"/><path d="M11 3.500q3 3.500 0 7" fill="none" stroke="#778"/></svg>
        <svg viewBox="0 0 14 14"><rect x="4.500" y="4.500" width="8" height="6" rx="1" fill="none" stroke="#fff"/><rect x="6" y="6" width="5" height="3" fill="#fff"/><path d="M13.500 6.500v2M1.500 1v3M4.500 1v3" stroke="#fff"/><path d="M0 4h6v2q0 2-2 2.500V11H2V8.500Q0 8 0 6z" fill="#fff"/></svg>
        <div class="when">19:30<br>17/10/2023</div>
        <span class="note">29</span>
      </div>`;
  }
}

@customElement('app-root')
class AppRoot extends LitElement {
  static styles = [base, css`
    :host { display: flex; flex-direction: column; height: 100vh; background: #f0f0f0; overflow: hidden; }
    .title { display: flex; align-items: center; gap: 1px; height: 18px; background: #f0f4fc; padding-left: 1px; }
    .title svg { width: 13px; height: 13px; }
    .win { display: flex; margin-left: auto; }
    .win button { width: 38px; display: grid; place-items: center; }
    .menu { display: flex; align-items: center; gap: 13px; height: 16px; padding-left: 3px; }
    .menu .m { width: 13px; height: 13px; margin-right: -7px; }
    .mdi { display: flex; gap: 2px; margin-left: auto; }
    .mdi button { width: 14px; height: 13px; background: #fff; display: grid; place-items: center; }
    .work { position: relative; flex: none; height: 270px; margin-top: 1px; display: grid; }
    depth-window { position: absolute; left: 615px; top: 31px; }
    .charts { display: flex; align-items: flex-start; height: 21px; background: #f2f2f2; padding-left: 1px; }
    .ct { color: #999; padding: 0 9px 0 12px; height: 15px; margin-top: 2px; border-right: 1px solid #888; }
    .ct.mid { padding: 0 8px; }
    .ct.cur { background: #fff; color: #111; border: 1px solid #222; border-top: 0; padding: 0 8px 0 7px; height: 17px; margin-top: 0; }
    .scroll { margin-left: auto; display: flex; gap: 11px; padding: 5px 6px 0 0; }
    trade-terminal { flex: 1; min-height: 0; }
    .status { display: grid; grid-template-columns: 457fr 94fr 86fr 58fr 58fr 57fr 57fr 156fr; align-items: center; height: 19px; border-top: 1px solid #d0d0d0; background: #f0f0f0; }
    .status div { height: 16px; line-height: 16px; border-right: 1px solid #c4c4c4; padding-left: 2px; }
    .status .net { display: flex; align-items: center; justify-content: flex-end; gap: 4px; padding-right: 20px; border: 0; }
  `];
  render() {
    return html`
      <header class="title"><svg viewBox="0 0 24 24">${logo}</svg><span>190188: Tickmill-Live02 - Tickmill Ltd - [EURUSD,M1]</span>
        <div class="win">
          <button aria-label="Kecilkan"><svg viewBox="0 0 13 13"><path d="M2.500 6.500h8" stroke="#555"/></svg></button>
          <button aria-label="Pulihkan"><svg viewBox="0 0 13 13"><path d="M2.500 4.500h6v6h-6zM4.500 4V2.500h6v6H9" fill="none" stroke="#222"/></svg></button>
          <button aria-label="Tutup"><svg viewBox="0 0 13 13"><path d="M2.500 2.500l8 8M10.500 2.500l-8 8" stroke="#222"/></svg></button>
        </div>
      </header>
      <nav class="menu"><svg class="m" viewBox="0 0 13 13"><rect x=".5" y="1.500" width="9" height="7" fill="#dbeaf8" stroke="#5e93c4"/><rect x="3.500" y="4.500" width="9" height="7" fill="#fff" stroke="#5e93c4"/><path d="M4 5.500h8M5 9l2-2 2 2 2-1" fill="none" stroke="#5e93c4"/></svg>
        ${['Berkas', 'Lihat', 'Sisipkan', 'Chart', 'Peralatan', 'Jendela', 'Bantuan'].map(m => html`<a href="#">${m}</a>`)}
        <div class="mdi">
          <button aria-label="Kecilkan grafik"><svg width="5" height="5"><path d="M0 3.500h4" stroke="#666"/></svg></button>
          <button aria-label="Pulihkan grafik"><svg width="6" height="6"><path d="M.5 2.500h3v2h-3zM2 1.500h3v2" fill="none" stroke="#777"/></svg></button>
          <button aria-label="Tutup grafik"><svg width="5" height="5"><path d="M1 1l3 3M4 1L1 4" stroke="#555"/></svg></button>
        </div>
      </nav>
      <tool-bars></tool-bars>
      <main class="work"><price-chart></price-chart><depth-window></depth-window></main>
      <nav class="charts"><button class="ct">EURUSD,H4</button><button class="ct mid">BTCUSD.M15</button><button class="ct cur">EURUSD,M1</button>
        <div class="scroll"><svg width="4" height="6"><path d="M4 0v6L0 3z" fill="#999"/></svg><svg width="4" height="6"><path d="M0 0v6l4-3z" fill="#999"/></svg></div></nav>
      <trade-terminal></trade-terminal>
      <footer class="status"><div>Bantuan, Tekan F1</div><div>British Pound</div><div></div><div></div><div></div><div></div><div></div>
        <div class="net"><svg width="20" height="11" viewBox="0 0 20 11"><path d="M1 0v11M4 0v11M7 0v11M10 2v9M13 1v10M16 0v11M19 0v11" stroke="#3f6b2c" stroke-width="2"/><path d="M10 5v6M13 6v5M16 3v8M19 2v9" stroke="#27527e" stroke-width="2"/></svg><span>11884/46 kb</span></div></footer>
      <task-bar></task-bar>`;
  }
}
